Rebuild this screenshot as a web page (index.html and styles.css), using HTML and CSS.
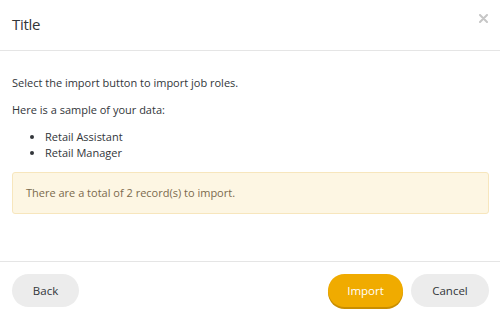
FILE: index.html
```html
<!DOCTYPE html>
<html lang="en">
<head>
    <meta charset="UTF-8">
    <title>Import</title>
    <link rel="stylesheet" href="styles.css">
</head>
<body>
    <div class="dialog">
        <div class="dialog-header">
            <h1>Title</h1>
            <svg class="close" width="9" height="9" viewBox="0 0 9 9">
                <path d="M1 1 L8 8 M8 1 L1 8" stroke="#c6c6c6" stroke-width="2" stroke-linecap="round"/>
            </svg>
        </div>
        <div class="dialog-body">
            <p>Select the import button to import job roles.</p>
            <p>Here is a sample of your data:</p>
            <ul>
                <li>Retail Assistant</li>
                <li>Retail Manager</li>
            </ul>
            <div class="notice">There are a total of 2 record(s) to import.</div>
        </div>
        <div class="dialog-footer">
            <button class="btn btn-back">Back</button>
            <div class="actions">
                <button class="btn btn-primary">Import</button>
                <button class="btn btn-cancel">Cancel</button>
            </div>
        </div>
    </div>
</body>
</html>
```

FILE: styles.css
```css
* {
    margin: 0;
    padding: 0;
    box-sizing: border-box;
}

body {
    background-color: #ffffff;
    color: #32363a;
    font-family: "Open Sans", Arial, sans-serif;
    font-size: 11px;
}

.dialog {
    width: 500px;
    height: 318px;
    display: flex;
    flex-direction: column;
}

/* Cabecalho */
.dialog-header {
    height: 51px;
    display: flex;
    justify-content: space-between;
    align-items: center;
    padding: 0 12px;
    border-bottom: 1px solid #e5e5e5;
}

.dialog-header h1 {
    font-size: 15px;
    font-weight: 400;
    letter-spacing: -0.3px;
    color: #32363a;
    margin-top: -2px;
}

.close {
    margin-top: -14px;
}

/* Conteudo */
.dialog-body {
    flex: 1;
    padding: 24px 11px 0 12px;
    line-height: 16px;
}

.dialog-body p {
    margin-bottom: 11px;
}

.dialog-body ul {
    padding-left: 33px;
    margin-top: 0;
    margin-bottom: 11px;
}

.notice {
    background-color: #fdf6e3;
    border: 1px solid #f7e6bd;
    border-radius: 3px;
    height: 42px;
    display: flex;
    align-items: center;
    padding: 0 13px;
    color: #7b6a4d;
}

/* Rodape */
.dialog-footer {
    height: 57px;
    border-top: 1px solid #e5e5e5;
    display: flex;
    justify-content: space-between;
    align-items: flex-start;
    padding: 12px 11px 0 12px;
}

.actions {
    display: flex;
    gap: 8px;
}

.btn {
    height: 33px;
    border: none;
    border-radius: 17px;
    background-color: #ececec;
    color: #32363a;
    font-family: "Open Sans", Arial, sans-serif;
    font-size: 11.5px;
}

.btn-back {
    width: 67px;
}

.btn-primary {
    width: 75px;
    background-color: #f0ab00;
    color: #ffffff;
    box-shadow: 0 2px 0 #c98e00;
}

.btn-cancel {
    width: 78px;
}
```
